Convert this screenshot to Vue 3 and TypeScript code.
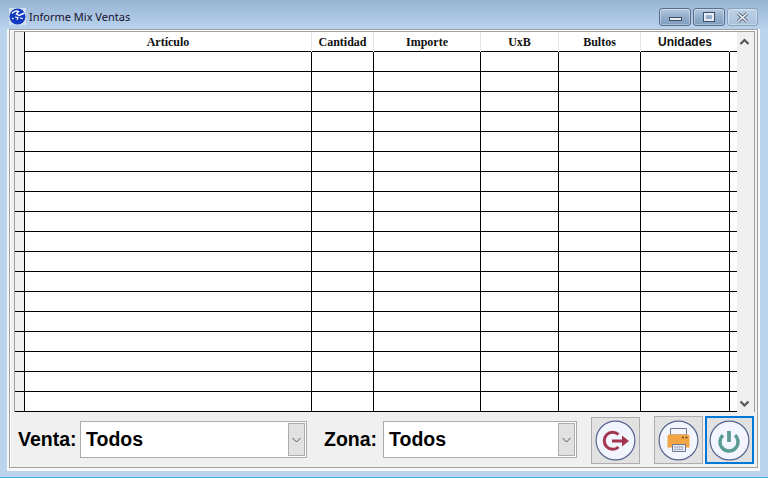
<script setup lang="ts">
const columns: string[] = ['Artículo', 'Cantidad', 'Importe', 'UxB', 'Bultos', 'Unidades']
const rows: number[] = Array.from({ length: 18 }, (_, i) => i)
</script>

<template>
  <div class="window">
    <div class="titlebar">
      <svg class="app-icon" width="17" height="17" viewBox="0 0 17 17">
        <rect x="0" y="0" width="17" height="17" fill="#d3e0f0" />
        <circle cx="8.5" cy="8.5" r="8" fill="#1238c0" />
        <path d="M3 5.5 C5 3 8 2.5 9.5 3.5 L7.5 6 L10 7.5 L15.5 5" fill="none" stroke="#fff" stroke-width="1.4" />
        <path d="M6 9 L9 9.5 L8 12 M11 10 L14 10.5 M3 10 L4.5 11" fill="none" stroke="#fff" stroke-width="1.1" />
      </svg>
      <span class="title">Informe Mix Ventas</span>
      <div class="controls">
        <div class="ctl">
          <span class="glyph-min"></span>
        </div>
        <div class="ctl">
          <span class="glyph-max"></span>
        </div>
        <div class="ctl ctl-close">
          <svg width="15" height="11" viewBox="0 0 15 11">
            <path d="M3 1.5 L12 9.5 M12 1.5 L3 9.5" stroke="#5e6c7e" stroke-width="3.6" />
            <path d="M3 1.5 L12 9.5 M12 1.5 L3 9.5" stroke="#eef2f7" stroke-width="1.6" />
          </svg>
        </div>
      </div>
    </div>

    <div class="client">
      <div class="group">
        <div class="grid-wrap">
          <div class="table">
            <div class="tr head">
              <div class="cell stub"></div>
              <div v-for="c in columns" :key="c" class="cell th" :class="{ sans: c === 'Unidades' }">{{ c }}</div>
              <div class="cell tail"></div>
            </div>
            <div v-for="r in rows" :key="r" class="tr">
              <div class="cell stub"></div>
              <div v-for="c in columns" :key="c" class="cell"></div>
              <div class="cell tail"></div>
            </div>
          </div>
          <div class="scrollbar">
            <svg width="17" height="17" viewBox="0 0 17 17">
              <path d="M3.5 11 L7.5 7 L11.5 11" fill="none" stroke="#555" stroke-width="2.2" />
            </svg>
            <svg width="17" height="17" viewBox="0 0 17 17">
              <path d="M3.5 6.5 L7.5 10.5 L11.5 6.5" fill="none" stroke="#555" stroke-width="2.2" />
            </svg>
          </div>
        </div>

        <div class="footer">
          <label class="lbl lbl-venta">Venta:</label>
          <div class="combo combo-venta">
            <span class="combo-text">Todos</span>
            <span class="combo-btn">
              <svg width="9" height="6" viewBox="0 0 9 6"><path d="M0.5 1 L4.5 5 L8.5 1" fill="none" stroke="#555" stroke-width="1" /></svg>
            </span>
          </div>
          <label class="lbl lbl-zona">Zona:</label>
          <div class="combo combo-zona">
            <span class="combo-text">Todos</span>
            <span class="combo-btn">
              <svg width="9" height="6" viewBox="0 0 9 6"><path d="M0.5 1 L4.5 5 L8.5 1" fill="none" stroke="#555" stroke-width="1" /></svg>
            </span>
          </div>

          <button class="icon-btn btn-exit">
            <svg width="41" height="41" viewBox="0 0 41 41">
              <circle cx="20.5" cy="20.5" r="19.4" fill="#f2f5fd" stroke="#56658f" stroke-width="1.2" />
              <path d="M23.5 14.5 A8.5 8.5 0 1 0 23.5 27" fill="none" stroke="#a3354e" stroke-width="3" />
              <path d="M17 21 L29 21" stroke="#a3354e" stroke-width="3" />
              <path d="M27 15.5 L34 21 L27 26.5 Z" fill="#a3354e" />
            </svg>
          </button>
          <button class="icon-btn btn-print">
            <svg width="41" height="41" viewBox="0 0 41 41">
              <circle cx="20.5" cy="20.5" r="19.4" fill="#f2f5fd" stroke="#56658f" stroke-width="1.2" />
              <path d="M12.5 8.5 H28.5 V15 H12.5 Z" fill="#f4f6fb" stroke="#6e7792" stroke-width="1" />
              <path d="M11 14.5 H30 Q31.5 14.5 31.5 16 V27.5 H9.5 V16 Q9.5 14.5 11 14.5 Z" fill="#f2a544" />
              <path d="M24 17.5 H26 M27.5 17.5 H29.5" stroke="#6a4d20" stroke-width="1.4" />
              <path d="M14.5 24.5 H27.5 V31.5 H14.5 Z" fill="#e7ebf4" stroke="#6e7792" stroke-width="1" />
              <path d="M16.5 27 H25.5 M16.5 29.3 H25.5" stroke="#6e7792" stroke-width="1" stroke-dasharray="1.5 0.8" />
            </svg>
          </button>
          <button class="icon-btn btn-power">
            <svg width="41" height="41" viewBox="0 0 41 41">
              <circle cx="20.5" cy="20.5" r="19.4" fill="#f2f5fd" stroke="#56658f" stroke-width="1.2" />
              <path d="M14 15.3 A9 9 0 1 0 26 15.3" fill="none" stroke="#5a9c93" stroke-width="3.4" />
              <path d="M20 11 L20 22" stroke="#5a9c93" stroke-width="3.8" />
            </svg>
          </button>
        </div>
      </div>
    </div>
  </div>
</template>

<style>
html,
body {
  margin: 0;
  overflow: hidden;
}
</style>

<style scoped>
.window {
  width: 768px;
  height: 478px;
  box-sizing: border-box;
  display: flex;
  flex-direction: column;
  background: linear-gradient(180deg, #97b4d2 0, #a9c4e0 15px, #bad4ee 30px, #bad4ee 100%);
  border-bottom: 1px solid #3fb4dc;
  padding: 0 8px 6px 7px;
  font-family: 'Liberation Sans', Arial, sans-serif;
}

.titlebar {
  height: 29px;
  flex: none;
  display: flex;
  align-items: flex-start;
  padding: 8px 2px 0 2px;
  box-sizing: border-box;
}
.app-icon {
  flex: none;
}
.title {
  margin-left: 3px;
  font-family: 'Noto Sans', sans-serif;
  font-size: 11px;
  line-height: 18px;
  color: #15102e;
}
.controls {
  margin-left: auto;
  display: flex;
  gap: 2px;
}
.ctl {
  width: 32px;
  height: 18px;
  box-sizing: border-box;
  border: 1px solid #5b6f8c;
  border-radius: 3px;
  background: linear-gradient(180deg, #b3c8de, #92aecb 50%, #7f9dbd);
  box-shadow: inset 0 0 0 1px rgba(255, 255, 255, 0.35);
  display: flex;
  align-items: center;
  justify-content: center;
}
.ctl-close {
  width: 31px;
  border-color: #8ba3bd;
  background: linear-gradient(180deg, #bed2e6, #a8c2dc);
}
.glyph-min {
  width: 11px;
  height: 2px;
  margin-top: 4px;
  background: #e6ecf3;
  border: 1px solid #3f4f66;
}
.glyph-max {
  width: 6px;
  height: 4px;
  border: 2px solid #e6ecf3;
  outline: 1px solid #3f4f66;
}

.client {
  flex: 1;
  min-height: 0;
  background: #f6f8fa;
  display: flex;
}
.group {
  flex: 1;
  margin: 0 2px 3px 2px;
  border: 1px solid #a0a0a0;
  background: #f0f0f0;
  box-shadow: inset 1px 1px 0 #fff;
  box-sizing: border-box;
  padding: 1px 2px 0 4px;
  display: flex;
  flex-direction: column;
}

.grid-wrap {
  display: flex;
  height: 381px;
  flex: none;
  box-sizing: border-box;
  border-top: 1px solid #a0a0a0;
  border-right: 1px solid #a0a0a0;
}
.table {
  width: 723px;
  background: #fff;
  flex: none;
  border-left: 1px solid #a0a0a0;
  box-sizing: border-box;
}
.tr {
  display: grid;
  grid-template-columns: 10px 287px 62px 107px 78px 82px 89px 7px;
  height: 20px;
  box-sizing: border-box;
  border-bottom: 1px solid #000;
}
.cell {
  box-sizing: border-box;
  border-right: 1px solid #000;
}
.cell:last-child {
  border-right: none;
}
.stub {
  background: #f0f0f0;
}
.th {
  border-right-color: #e4e4e4;
  text-align: center;
  font-family: 'Liberation Serif', 'Times New Roman', serif;
  font-weight: 700;
  font-size: 12px;
  line-height: 20px;
  color: #111;
}
.th:nth-last-child(2) {
  border-right-color: #fff;
}
.sans {
  font-family: 'Liberation Sans', Arial, sans-serif;
}
.scrollbar {
  width: 17px;
  flex: none;
  background: #f0f0f0;
  box-sizing: border-box;
  display: flex;
  flex-direction: column;
  justify-content: space-between;
  padding: 1px 0 0;
}

.footer {
  display: flex;
  align-items: flex-start;
  margin-top: 4px;
  height: 48px;
}
.lbl {
  font-weight: 700;
  font-size: 19.5px;
  color: #000;
  line-height: 37px;
  margin-top: 5px;
  white-space: nowrap;
}
.lbl-venta {
  margin-left: 4px;
  width: 59px;
}
.lbl-zona {
  margin-left: 17px;
  width: 53px;
}
.combo {
  height: 37px;
  margin-top: 5px;
  margin-left: 3px;
  box-sizing: border-box;
  background: #fff;
  border: 1px solid #ababab;
  display: flex;
  align-items: center;
  justify-content: space-between;
  padding: 1px;
}
.combo-venta {
  width: 227px;
}
.combo-zona {
  width: 194px;
  margin-left: 6px;
}
.combo-text {
  margin-left: 4px;
  font-weight: 700;
  font-size: 19.5px;
  color: #000;
}
.combo-btn {
  width: 17px;
  height: 33px;
  background: #e1e1e1;
  border: 1px solid #adadad;
  box-sizing: border-box;
  display: flex;
  align-items: center;
  justify-content: center;
}
.icon-btn {
  width: 49px;
  height: 48px;
  padding: 0;
  box-sizing: border-box;
  background: #e1e1e1;
  border: 1px solid #adadad;
  display: flex;
  align-items: center;
  justify-content: center;
}
.btn-exit {
  margin-left: 14px;
  margin-top: 1px;
  height: 47px;
}
.btn-print {
  margin-left: 14px;
}
.btn-power {
  margin-left: 2px;
  border: 2px solid #0078d7;
}
</style>
